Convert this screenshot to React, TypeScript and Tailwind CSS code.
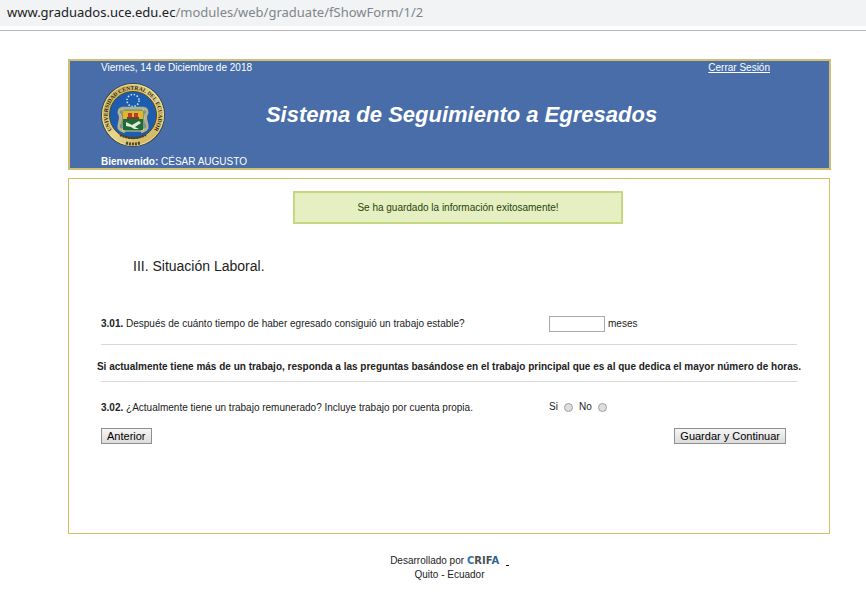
import { useState } from "react";

/* ─── University seal ─── */

function Seal({ className }: { className?: string }) {
    return (
        <svg className={className} viewBox="0 0 64 66" role="img" aria-label="Universidad Central del Ecuador">
            <defs>
                <linearGradient id="gold" x1="0" y1="0" x2="1" y2="1">
                    <stop offset="0" stopColor="#b79a48" />
                    <stop offset="0.5" stopColor="#e8d68c" />
                    <stop offset="1" stopColor="#c9a850" />
                </linearGradient>
                <path id="seal-top" d="M10.5 47A25.5 25.5 0 1 1 53.5 47" />
            </defs>
            <circle cx="32" cy="33" r="32" fill="#3d4a4a" />
            <circle cx="32" cy="33" r="31" fill="url(#gold)" />
            <circle cx="32" cy="33" r="30.5" fill="none" stroke="#f3e7a8" strokeWidth="0.8" />
            <circle cx="32" cy="33" r="23.5" fill="#1d5cae" stroke="#4d4a2a" strokeWidth="1" />

            <text fontFamily="Liberation Serif, serif" fontWeight="700" fontSize="5.6" fill="#2b2810">
                <textPath href="#seal-top" startOffset="50%" textAnchor="middle">
                    UNIVERSIDAD CENTRAL DEL ECUADOR
                </textPath>
            </text>

            {/* Ring of stars */}
            <circle
                cx="32"
                cy="18.5"
                r="6"
                fill="none"
                stroke="#cfe4f8"
                strokeWidth="1.6"
                strokeDasharray="1.4 1.74"
            />

            {/* Side scrolls */}
            <path
                d="M23 27C18 25 17 30 19 33C21 38 17 41 18 46C19 48 22 49 24 50"
                fill="none"
                stroke="#b9b088"
                strokeWidth="3"
            />
            <path
                d="M41 27C46 25 47 30 45 33C43 38 47 41 46 46C45 48 42 49 40 50"
                fill="none"
                stroke="#b9b088"
                strokeWidth="3"
            />
            <path d="M21 26H43" stroke="#a9b58e" strokeWidth="2.5" />

            {/* Shield */}
            <path d="M21 28H43V46Q43 49 40 49H24Q21 49 21 46Z" fill="#1d6b3c" stroke="#ddd092" />
            <path d="M22 29H42V37H22Z" fill="#e5b32e" />
            <path d="M27 31H31V35H27ZM33 31H37V35H33Z" fill="#b5402a" />
            <path d="M26 35H38V37H26Z" fill="#7f3b20" />
            <path d="M25 40L31 43L38 39L40 41L34 45L38 47H33L30 45L25 44Z" fill="#e6ead2" />

            {/* Motto ribbon */}
            <path d="M19 53Q32 59 45 53" fill="none" stroke="#4b4320" strokeWidth="2.4" strokeDasharray="2 0.8" />
            <path d="M25 61Q32 63 39 61" fill="none" stroke="#4b4320" strokeWidth="3" strokeDasharray="2 1" />
        </svg>
    );
}

function CrifaLogo({ className }: { className?: string }) {
    return (
        <svg className={className} viewBox="0 0 42 12" role="img" aria-label="CRIFA">
            <text x="3" y="9" fontFamily="DejaVu Sans, sans-serif" fontSize="10" fontWeight="700">
                <tspan fill="#2f74b0">C</tspan>
                <tspan fill="#4b5058">RIF</tspan>
                <tspan fill="#2f6294">A</tspan>
            </text>
        </svg>
    );
}

const buttonClass =
    "h-4 border border-[#8f8f8f] bg-linear-to-b from-[#f6f6f6] to-[#dcdcdc] px-[5px] text-[11px] leading-[14px] text-black";

const radioClass =
    "size-[9px] appearance-none rounded-full border border-[#a0a0a0] bg-[#dedede] checked:bg-[#555555]";

export default function App() {
    const [months, setMonths] = useState("");
    const [employed, setEmployed] = useState("");

    return (
        <div className="bg-white font-['Liberation_Sans',Arial,sans-serif] text-[10px] leading-3 text-[#222222]">
            {/* Address bar */}
            <div className="border-b border-[#b4b6b9] pb-1">
                <div className="h-[26px] bg-[#f1f3f4] px-[7px] font-['Noto_Sans',sans-serif] text-[13px] leading-[25px] text-[#80868b]">
                    <span className="text-[#202124]">www.graduados.uce.edu.ec</span>
                    /modules/web/graduate/fShowForm/1/2
                </div>
            </div>

            <div className="pt-7 pr-[35px] pl-[68px]">
                <header className="border-2 border-[#d0be72] bg-[#486da8] px-[31px] text-white">
                    <div className="flex justify-between pt-px pr-7">
                        <span>Viernes, 14 de Diciembre de 2018</span>
                        <a href="#" className="underline">
                            Cerrar Sesión
                        </a>
                    </div>
                    <div className="grid grid-cols-[64px_1fr_40px] items-center pt-2">
                        <Seal className="h-[66px] w-16" />
                        <h1 className="text-center text-[22px] leading-7 font-bold italic">
                            Sistema de Seguimiento a Egresados
                        </h1>
                    </div>
                    <p className="pt-2">
                        <strong>Bienvenido:</strong> CÉSAR AUGUSTO
                    </p>
                </header>

                <main className="mt-2 mr-px border border-[#cfc266] px-8 pt-3 pb-[89px]">
                    <div className="flex justify-center pl-[18px]">
                        <p
                            role="status"
                            className="w-[330px] border-2 border-[#c5d880] bg-[#e6efc2] py-1.5 text-center leading-[17px] text-[#264409]"
                        >
                            Se ha guardado la información exitosamente!
                        </p>
                    </div>

                    <h2 className="pt-8 pl-8 text-[14px] leading-5">III. Situación Laboral.</h2>

                    <form onSubmit={(e) => e.preventDefault()}>
                        <div className="mt-10 flex items-center border-b border-[#d8d8d8] pb-3">
                            <label htmlFor="months" className="w-[448px]">
                                <strong>3.01.</strong> Después de cuánto tiempo de haber egresado consiguió un
                                trabajo estable?
                            </label>
                            <input
                                id="months"
                                value={months}
                                onChange={(e) => setMonths(e.target.value)}
                                className="h-4 w-14 border border-[#a9a9a9] bg-white px-1"
                            />
                            <span className="pl-[3px]">meses</span>
                        </div>

                        <div className="border-b border-[#d8d8d8] pt-4 pb-2">
                            <p className="-mx-4 text-center font-bold">
                                Si actualmente tiene más de un trabajo, responda a las preguntas basándose en el
                                trabajo principal que es al que dedica el mayor número de horas.
                            </p>
                        </div>

                        <fieldset className="mt-[18px] flex items-center">
                            <legend className="float-left w-[448px] pt-[2px]">
                                <strong>3.02.</strong> ¿Actualmente tiene un trabajo remunerado? Incluye trabajo por
                                cuenta propia.
                            </legend>
                            <label className="flex items-center gap-[6px]">
                                Si
                                <input
                                    type="radio"
                                    name="employed"
                                    checked={employed === "si"}
                                    onChange={() => setEmployed("si")}
                                    className={radioClass}
                                />
                            </label>
                            <label className="flex items-center gap-[6px] pl-[6px]">
                                No
                                <input
                                    type="radio"
                                    name="employed"
                                    checked={employed === "no"}
                                    onChange={() => setEmployed("no")}
                                    className={radioClass}
                                />
                            </label>
                        </fieldset>

                        <div className="mt-[14px] flex justify-between pr-[11px]">
                            <button type="button" className={buttonClass}>
                                Anterior
                            </button>
                            <button type="submit" className={buttonClass}>
                                Guardar y Continuar
                            </button>
                        </div>
                    </form>
                </main>

                <footer className="pt-5 text-center leading-[14px]">
                    <p className="flex justify-center">
                        Desarrollado por
                        <a href="#" className="flex text-black underline">
                            <CrifaLogo className="mt-px h-3 w-[42px]" />
                            &nbsp;
                        </a>
                    </p>
                    <p>Quito - Ecuador</p>
                </footer>
            </div>
        </div>
    );
}
